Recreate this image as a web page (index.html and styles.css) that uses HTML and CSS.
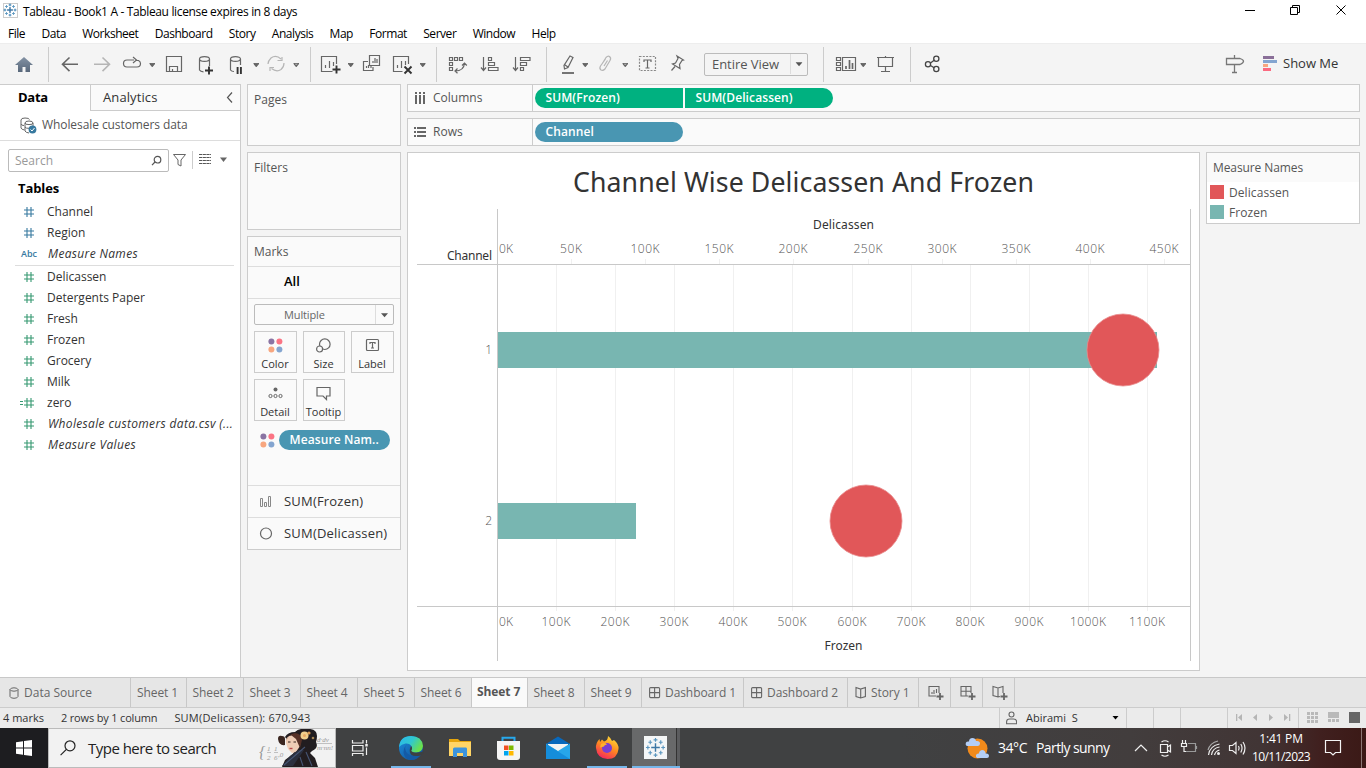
FILE: index.html
```html
<!DOCTYPE html>
<html lang="en">
<head>
<meta charset="utf-8">
<title>Tableau - Book1 A</title>
<link rel="stylesheet" href="styles.css">
</head>
<body>
<svg width="0" height="0" class="defs">
  <defs>
    <symbol id="hash" viewBox="0 0 12 12"><path d="M4 1v10M8 1v10M1 4h10M1 8h10" fill="none" stroke="currentColor" stroke-width="1.1"/></symbol>
    <symbol id="caret" viewBox="0 0 6 4"><path d="M0 0h6L3 3.6z" fill="currentColor"/></symbol>
    <symbol id="dash" viewBox="0 0 12 12"><rect x=".6" y=".6" width="10" height="10" rx="1" fill="none" stroke="currentColor" stroke-width="1.1"/><path d="M5.6 1v10M1 5.6h10" stroke="currentColor" stroke-width="1.1"/></symbol>
    <symbol id="book" viewBox="0 0 12 13"><path d="M1 1.500l4.600 1.600L10.400 1.500v9L5.600 12 1 10.500zM5.700 3v9" fill="none" stroke="currentColor" stroke-width="1.1"/></symbol>
    <symbol id="dots" viewBox="0 0 15 15"><circle cx="3.400" cy="3.400" r="3" fill="#8a74a3"/><circle cx="11.400" cy="3.400" r="3" fill="#fb7484"/><circle cx="3.400" cy="11.400" r="3" fill="#f7a67f"/><circle cx="11.400" cy="11.400" r="3" fill="#84a5d0"/></symbol>
    <symbol id="logo" viewBox="0 0 22 22">
      <path d="M11 6.500v9M6.500 11h9" stroke="#3d77a5" stroke-width="1.500"/>
      <path d="M11 1v4M9 3h4M11 17v4M9 19h4M3 9v4M1 11h4M19 9v4M17 11h4M5.500 3.500v4M3.500 5.500h4M16.500 3.500v4M14.500 5.500h4M5.500 14.500v4M3.500 16.500h4M16.500 14.500v4M14.500 16.500h4" stroke="#5b96bf" stroke-width="1.200"/>
    </symbol>
  </defs>
</svg>

<header class="titlebar">
  <svg class="app-icon" width="15" height="15"><rect x=".5" y=".5" width="14" height="14" fill="#fff" stroke="#ccc"/><g class="logo-strong"><use href="#logo" x="0" y="0" width="14" height="14"/><use href="#logo" x="0" y="0" width="14" height="14"/></g></svg>
  <span class="app-title">Tableau - Book1 A - Tableau license expires in 8 days</span>
  <svg class="window-buttons" width="110" height="20" viewBox="1240 1 110 20" fill="none" stroke="#000"><path d="M1245 10.500h10M1290.500 7.500h7v7h-7zM1292.500 7v-1.500h7v7h-1.500M1336.500 5.500l9 9M1345.500 5.500l-9 9"/></svg>
</header>
<nav class="menubar"><span>File</span><span>Data</span><span>Worksheet</span><span>Dashboard</span><span>Story</span><span>Analysis</span><span>Map</span><span>Format</span><span>Server</span><span>Window</span><span>Help</span></nav>

<section class="toolbar">
  <svg class="group" width="48" height="35" viewBox="0 47 48 35"><defs><linearGradient id="hg" y1="0" y2="1" x2="0"><stop stop-color="#8392a4"/><stop offset="1" stop-color="#59687b"/></linearGradient></defs><path d="M24 57l9 8h-3v7h-4.500v-5h-3v5H18v-7h-3z" fill="url(#hg)"/></svg>
  <svg class="group" width="262" height="35" viewBox="48 47 262 35" fill="none" stroke="#666" stroke-width="1.2">
    <path d="M78 64.300H63M69.500 57.500l-7 6.800 7 6.800" stroke-width="1.6"/>
    <path d="M94 64.300h15M102.500 57.500l7 6.800-7 6.800" stroke="#b5b5b5" stroke-width="1.6"/>
    <path d="M134 60h-7q-3.500 0-3.500 3.500t3.500 3.500h10q3.500 0 3.500-3.500 0-2-2-3h-3M133 57l3.500 3-3.500 3"/>
    <use href="#caret" x="149.500" y="63" width="5.500" height="4" color="#666"/>
    <path d="M166.500 56.500h15v15h-15zM169.500 71v-4.500h8v4.500M172.500 71v-2"/>
    <path d="M199.500 59v11q1 1.800 4 1.800M209.500 59v7M199.500 59a5 2.400 0 0 1 10 0a5 2.400 0 0 1-10 0"/><path d="M209 66.500v8M205 70.500h8" stroke="#333" stroke-width="1.9"/>
    <path d="M230.500 59v11q1 1.500 3.500 1.500M240.500 59v6M230.500 59a5 2.400 0 0 1 10 0a5 2.400 0 0 1-10 0"/><path d="M237.600 67v7M240.900 67v7" stroke="#333" stroke-width="1.9"/>
    <use href="#caret" x="253.500" y="63" width="5.500" height="4" color="#666"/>
    <g stroke="#b5b5b5"><path d="M268 64q0-3 3-6 5-3.500 10 1M284 63q0 4-3 6.500-4.500 3-9.500-1M282 57v3.500h-4.500M270 71v-3.500h4"/></g>
    <use href="#caret" x="293.500" y="63" width="5.500" height="4" color="#aaa"/>
  </svg>
  <svg class="group" width="126" height="35" viewBox="310 47 126 35" fill="none" stroke="#666" stroke-width="1.2">
    <path d="M336.500 64v-7.500h-15v15h11M325.500 68v-3M329.500 68v-7M333.500 66v-4"/><path d="M336.500 65.500v8M332.500 69.500h8" stroke="#333" stroke-width="1.9"/>
    <use href="#caret" x="348" y="63" width="5.500" height="4" color="#666"/>
    <path d="M369.500 55.500h10v10h-10zM373 63v-2M375 63v-5M377 63v-4M368 61.500h-4.500v9h9.500v-3.500M366.500 68v-2M368.500 68v-3M371 68v-2"/>
    <path d="M408.500 64v-7.500h-15v15h9M397.500 68v-3M401.500 68v-7M405.500 65v-4"/><path d="M404.500 66.500l7 7M411.500 66.500l-7 7" stroke="#333" stroke-width="1.9"/>
    <use href="#caret" x="420" y="63" width="5.500" height="4" color="#666"/>
  </svg>
  <svg class="group" width="110" height="35" viewBox="436 47 110 35" fill="none" stroke="#666" stroke-width="1.2">
    <path d="M449.500 57.500h3v3h-3zM454.500 57.500h3v3h-3zM459.500 57.500h3v3h-3zM449.500 62.500h3v3h-3zM449.500 67.500h3v3h-3zM455 71q9 0 9.500-8M462 65.500l2.500-2.500 2.300 2.500M457.500 68.500L455 71l2.500 2.300"/>
    <path d="M483.500 57v13M481 67.500l2.500 3 2.500-3M488.500 57.500h3v3h-3zM488.500 62.500h6v3h-6zM488.500 67.500h9.500v3h-9.500z"/>
    <path d="M515.500 57v13M513 67.500l2.500 3 2.500-3M520.500 57.500h9.500v3h-9.500zM520.500 62.500h6v3h-6zM520.500 67.500h3v3h-3z"/>
  </svg>
  <svg width="158" height="35" viewBox="546 47 158 35" fill="none" stroke="#666" stroke-width="1.2">
    <path d="M570 56l3 1.500-5 10-3.500 1.500-.5-3.500zM565 65l3 2"/><path d="M562 73h12" stroke-width="1.8"/>
    <use href="#caret" x="582.500" y="63" width="5.500" height="4" color="#666"/>
    <path d="M602 64l4-6.500q2-2 3.500-1 2 1.500.5 4l-5 8.500q-2 2-4 1-2-1.500-.5-4l5-7M604 66l3.500-5.500" stroke="#b5b5b5"/>
    <use href="#caret" x="622.500" y="63" width="5.500" height="4" color="#aaa"/>
    <path d="M639.500 56.500h16v14h-16z" stroke-dasharray="2 1.300" stroke="#888"/><path d="M644 62v-2h7v2M647.500 60v8M645.500 68h4"/>
    <path d="M677 56l6.500 4-1.500.5-2.500 4 .5 4-7.500-4.500 3-1 2.500-4.500zM675 66.500l-3.500 4"/>
  </svg>
  <div class="fit"><span>Entire View</span><svg width="17" height="20"><use href="#caret" x="4.500" y="8" width="7" height="5" color="#555"/></svg></div>
  <svg class="group" width="102" height="35" viewBox="808 47 102 35" fill="none" stroke="#666" stroke-width="1.2">
    <path d="M823.500 47v35" stroke="#ccc" stroke-width="1"/>
    <path d="M836.500 57.500h4v3h-4zM836.500 62.500h4v3h-4zM836.500 67.500h4v3h-4zM842.500 57.500h13v13h-13z"/><path d="M846 69v-3M849.500 69v-9M852.500 69v-6" stroke-width="1.7"/>
    <use href="#caret" x="860.500" y="63" width="5.500" height="4" color="#666"/>
    <path d="M877 57.500h17M878.500 58v8.500h14V58M885.500 67v4.500M881 71.500h9M885.500 56v1"/>
  </svg>
  <svg width="340" height="35" viewBox="910 47 340 35" fill="none" stroke="#444" stroke-width="1.3">
    <path d="M930.500 63l4-3M930.500 65.500l4 2.500"/><circle cx="928" cy="64.200" r="2.600"/><circle cx="936.300" cy="58.800" r="2.600"/><circle cx="936.300" cy="69" r="2.600"/>
    <path d="M1226.500 58.500h13.500q3.500 1 3.500 2.700t-3.500 3.300h-13.500zM1234.500 55v3M1234.500 65v7M1232 72.500h5" stroke="#777"/>
  </svg>
  <svg width="33" height="35" viewBox="1250 47 33 35"><path d="M1263 56h11v3h-11z" fill="#8a6f98"/><path d="M1263 60h14v3h-14z" fill="#84a5d0"/><path d="M1263 64h5v3h-5z" fill="#f7a67f"/><path d="M1263 68h8v3h-8z" fill="#fb6a80"/></svg>
  <span class="showme">Show Me</span>
</section>

<main class="workspace">
  <aside class="data-pane">
    <div class="pane-tabs"><b>Data</b><span class="analytics">Analytics<svg width="7" height="11" fill="none" stroke="#555" stroke-width="1.200"><path d="M6 .5l-4.500 5 4.500 5"/></svg></span></div>
    <div class="source"><svg width="18" height="18" fill="none" stroke="#666"><path d="M1 3v8q.5 1.500 3.500 2M1 3q0-2 4-2t4.500 1.500M1 7q.5 1.500 3 1.500M5 6q0-2 4-2t4 2M5 6v8q.5 1.500 4 2M5 6q0 1.600 4 1.600t4-1.600v3M5 10q1 1.600 4 1.300"/><circle cx="12.500" cy="12.500" r="3.900" fill="#37799f" stroke="none"/><path d="M10.500 12.500l1.500 1.500 2.500-3" stroke="#fff"/></svg><span>Wholesale customers data</span></div>
    <div class="search-row">
      <div class="search"><span>Search</span><svg width="12" height="12" fill="none" stroke="#555" stroke-width="1.200"><circle cx="6.500" cy="4.700" r="3.300"/><path d="M4 7L1 10.200"/></svg></div>
      <svg width="62" height="22" viewBox="169 149 62 22" fill="none" stroke="#666"><path d="M173.500 154.500h12l-4.500 5.500v6l-3-1.500V160z"/><path d="M192.500 151v18" stroke="#ccc"/><path d="M199 155.500h12M199 158.500h12M199 161.500h12M199 164.500h12" stroke="#555" stroke-dasharray="3.200 .500" transform="translate(0 -1)"/><path d="M220 157.500h7l-3.500 4.500z" fill="#666" stroke="none"/></svg>
    </div>
    <h3>Tables</h3>
    <ul class="fields dims">
      <li><svg><use href="#hash"/></svg>Channel</li>
      <li><svg><use href="#hash"/></svg>Region</li>
      <li><small>Abc</small><i>Measure Names</i></li>
    </ul>
    <ul class="fields meas">
      <li><svg><use href="#hash"/></svg>Delicassen</li>
      <li><svg><use href="#hash"/></svg>Detergents Paper</li>
      <li><svg><use href="#hash"/></svg>Fresh</li>
      <li><svg><use href="#hash"/></svg>Frozen</li>
      <li><svg><use href="#hash"/></svg>Grocery</li>
      <li><svg><use href="#hash"/></svg>Milk</li>
      <li><svg class="calc" viewBox="0 0 16 12"><path d="M1 4.500h3M1 7.500h3" stroke="currentColor"/><use href="#hash" x="4" width="12" height="12"/></svg>zero</li>
      <li><svg><use href="#hash"/></svg><i>Wholesale customers data.csv (...</i></li>
      <li><svg><use href="#hash"/></svg><i>Measure Values</i></li>
    </ul>
  </aside>

  <section class="cards">
    <div class="card pages">Pages</div>
    <div class="card filters">Filters</div>
    <div class="card marks">
      <div class="marks-head">Marks</div>
      <div class="marks-all">All</div>
      <div class="marks-body">
        <div class="mark-type"><span>Multiple</span><svg width="18" height="19"><use href="#caret" x="5" y="8" width="7" height="5" color="#555"/></svg></div>
        <div class="mark-buttons">
          <div><svg width="15" height="15"><use href="#dots"/></svg>Color</div>
          <div><svg width="15" height="15" fill="none" stroke="#666" stroke-width="1.2"><circle cx="8.800" cy="6.200" r="5.300"/><circle cx="3.600" cy="11" r="3" fill="#fafafa"/></svg>Size</div>
          <div><svg width="15" height="15" fill="none" stroke="#666" stroke-width="1.200"><rect x="1.500" y="1.500" width="12" height="11" rx="1"/><path d="M5 6V4.500h5V6M7.500 4.500V10M6 10h3"/></svg>Label</div>
          <div><svg width="15" height="15" fill="none" stroke="#666"><circle cx="7.500" cy="3.500" r="2" fill="#666" stroke="none"/><circle cx="2.500" cy="10" r="1.600"/><circle cx="7.500" cy="10" r="1.600"/><circle cx="12.500" cy="10" r="1.600"/></svg>Detail</div>
          <div><svg width="15" height="15" fill="none" stroke="#666" stroke-width="1.200"><path d="M1 1.500h13v8.500h-3.500v3.500L7 10H1z"/></svg>Tooltip</div>
        </div>
        <div class="encoding"><svg width="15" height="15"><use href="#dots"/></svg><span class="pill blue">Measure Nam..</span></div>
      </div>
      <div class="marks-row"><svg width="14" height="14" fill="none" stroke="#888"><path d="M1.500 3.500h2v8h-2zM5.500 7.500h2v4h-2zM9.500 1.500h2v10h-2z"/></svg>SUM(Frozen)</div>
      <div class="marks-row"><svg width="14" height="14" fill="none" stroke="#666" stroke-width="1.200"><circle cx="7" cy="6.500" r="5.500"/></svg>SUM(Delicassen)</div>
    </div>
  </section>

  <section class="sheet">
    <div class="shelf"><div class="shelf-name"><svg width="12" height="12" viewBox="0 0 12 12" fill="#666"><path d="M1 0h2v2H1zM1 3h2v9H1zM5 0h2v2H5zM5 3h2v9H5zM9 0h2v2H9zM9 3h2v9H9z"/></svg>Columns</div><span class="pill green first">SUM(Frozen)</span><span class="pill green last">SUM(Delicassen)</span></div>
    <div class="shelf"><div class="shelf-name"><svg width="12" height="12" viewBox="0 0 12 12" fill="#666"><path d="M0 1h2v2H0zM3 1h9v2H3zM0 5h2v2H0zM3 5h9v2H3zM0 9h2v2H0zM3 9h9v2H3z"/></svg>Rows</div><span class="pill blue">Channel</span></div>
    <div class="view-row">
      <div class="view">
        <svg class="chart" width="791" height="517" viewBox="408 153 791 517">
          <text class="chart-title" x="803.500" y="192" text-anchor="middle" textLength="461">Channel Wise Delicassen And Frozen</text>
          <g class="axis-title"><text x="843.500" y="229" text-anchor="middle" textLength="61">Delicassen</text><text x="843.500" y="650" text-anchor="middle" textLength="38">Frozen</text><text x="447" y="260" textLength="45">Channel</text></g>
          <path class="grid" d="M556.500 265v346M615.500 265v346M674.500 265v346M733.500 265v346M792.500 265v346M852.500 265v346M911.500 265v346M970.500 265v346M1029.500 265v346M1088.500 265v346M1147.500 265v346M571.500 259v5M645.500 259v5M719.500 259v5M793.500 259v5M868.500 259v5M942.500 259v5M1016.500 259v5M1090.500 259v5M1164.500 259v5"/>
          <path class="rule" d="M497.500 209v452M1190.500 209v452M417 264.500h774M417 606.500h774"/>
          <g class="tick">
            <text x="499" y="253" textLength="14">0K</text>
            <g text-anchor="middle"><text x="571" y="253" textLength="22">50K</text><text x="645" y="253" textLength="29">100K</text><text x="719" y="253" textLength="29">150K</text><text x="793" y="253" textLength="29">200K</text><text x="868" y="253" textLength="29">250K</text><text x="942" y="253" textLength="29">300K</text><text x="1016" y="253" textLength="29">350K</text><text x="1090" y="253" textLength="29">400K</text><text x="1164" y="253" textLength="29">450K</text></g>
            <text x="499" y="626" textLength="14">0K</text>
            <g text-anchor="middle"><text x="556" y="626" textLength="29">100K</text><text x="615" y="626" textLength="29">200K</text><text x="674" y="626" textLength="29">300K</text><text x="733" y="626" textLength="29">400K</text><text x="792" y="626" textLength="29">500K</text><text x="852" y="626" textLength="29">600K</text><text x="911" y="626" textLength="29">700K</text><text x="970" y="626" textLength="29">800K</text><text x="1029" y="626" textLength="29">900K</text><text x="1088" y="626" textLength="36">1000K</text><text x="1147" y="626" textLength="36">1100K</text></g>
            <g text-anchor="end"><text x="492" y="354">1</text><text x="492" y="525">2</text></g>
          </g>
          <g fill="#78b6b1"><rect x="498" y="332" width="659" height="36"/><rect x="498" y="503" width="138" height="36"/></g>
          <g fill="#e15759" stroke="#e98a8b" stroke-width=".8"><circle cx="1123" cy="350" r="36"/><circle cx="866" cy="521" r="36"/></g>
        </svg>
      </div>
      <div class="legend">
        <div class="legend-head">Measure Names</div>
        <div class="legend-item"><i class="red"></i>Delicassen</div>
        <div class="legend-item"><i class="teal"></i>Frozen</div>
      </div>
    </div>
  </section>
</main>

<nav class="sheet-tabs">
  <span class="ds"><svg width="10" height="12" fill="none" stroke="#666"><path d="M1 2.500v7q.5 1.800 4 1.800t4-1.800v-7q-.5-1.700-4-1.700T1 2.500q.5 1.700 4 1.700t4-1.700"/></svg>Data Source</span><span>Sheet 1</span><span class="w57">Sheet 2</span><span class="w57">Sheet 3</span><span class="w57">Sheet 4</span><span class="w57">Sheet 5</span><span class="w57">Sheet 6</span><span class="active">Sheet 7</span><span class="w57">Sheet 8</span><span class="w57">Sheet 9</span><span class="w102"><svg width="12" height="12"><use href="#dash"/></svg>Dashboard 1</span><span class="w104"><svg width="12" height="12"><use href="#dash"/></svg>Dashboard 2</span><span class="w71"><svg width="12" height="13"><use href="#book"/></svg>Story 1</span><span class="new"><svg width="16" height="16" fill="none" stroke="#666" stroke-width="1.1"><path d="M11 8V1.500H1v9.500h7M4 9V7M6 9V5M8.500 8V4"/><path d="M12 8v7M8.500 11.500h7" stroke-width="1.800"/></svg></span><span class="new"><svg width="16" height="16" fill="none" stroke="#666" stroke-width="1.1"><path d="M11 8V1.500H1V11h7M6 1.500V11M1 6.200h10"/><path d="M12 8v7M8.500 11.500h7" stroke-width="1.800"/></svg></span><span class="new"><svg width="16" height="16" fill="none" stroke="#666" stroke-width="1.1"><path d="M11 8V1.500L6 3 1 1.500v9l5 1.500 2-.5M6 3v9"/><path d="M12 8v7M8.500 11.500h7" stroke-width="1.800"/></svg></span>
</nav>

<div class="status">
  <span>4 marks</span><span class="size">2 rows by 1 column</span><span class="total">SUM(Delicassen): 670,943</span>
  <div class="user"><svg width="11" height="14" fill="none" stroke="#666" stroke-width="1.1"><circle cx="5.500" cy="3.500" r="2.500"/><path d="M.6 12.800v-2q0-2.800 3-2.800h4q3 0 3 2.800v2z"/></svg><span>Abirami&nbsp; S</span><svg class="user-caret" width="7" height="4"><use href="#caret" width="7" height="4" color="#000"/></svg></div>
  <svg class="status-nav" width="240" height="20" viewBox="1126 708 240 20"><path d="M1126.500 708v20M1153.500 708v20M1180.500 708v20M1227.500 708v20M1298.500 708v20" stroke="#ccc"/><path d="M1236 714h1.300v7H1236zM1242 714v7l-4-3.500zM1257 714v7l-4-3.500zM1269 714v7l4-3.500zM1284 714v7l4-3.500zM1289 714h1.300v7H1289z" fill="#b5b5b5"/><path d="M1307 712h3v3h-3zM1311 712h3v3h-3zM1315 712h3v3h-3zM1307 716h3v3h-3zM1311 716h3v3h-3zM1315 716h3v3h-3zM1307 720h3v3h-3zM1311 720h3v3h-3zM1315 720h3v3h-3zM1328 712h11v6h-11zM1328 719h3v3h-3zM1332 719h3v3h-3zM1336 719h3v3h-3z" fill="#b9b9b9"/><path d="M1349 712h11v11h-11z" fill="#666"/></svg>
</div>

<footer class="taskbar">
  <div class="start"><svg width="16" height="16" fill="#fff"><path d="M0 2.200l7-1V7.600H0zM8 1l8-1v7.600H8zM0 8.500h7v6.300l-7-1zM8 8.500h8V16l-8-1.100z"/></svg></div>
  <div class="win-search">
    <svg width="16" height="16" fill="none" stroke="#222" stroke-width="1.200"><circle cx="10" cy="5.800" r="5"/><path d="M6.400 9.400L.6 15.200"/></svg>
    <span>Type here to search</span>
    <svg class="portrait" width="76" height="38" viewBox="259 729 76 38">
      <g class="formula"><text x="259" y="758" font-size="16">{</text><text x="267" y="751" font-size="7">1</text><text x="267" y="760" font-size="7">2</text><text x="274" y="751" font-size="7">1</text><text x="274" y="760" font-size="7">6</text><text x="278" y="757" font-size="7">,0</text><text x="317" y="742" font-size="7">d·dv</text><text x="317" y="750" font-size="7">m·nn!</text></g>
      <path d="M317 743.500h15M267 752.500h4M274 752.500h4" stroke="#aaa" stroke-width=".7"/>
      <path d="M278 739q0-4 4-3 3 0 3 3l0 6q-6 1-7-6z" fill="#3a2620"/>
      <path d="M285 737q3-5 10-5 4-4 11-3 11-1 11 7 0 3-1 6 3 6-4 9l-2 2 5 5 3 9h-36l3-7 8-6 2-4z" fill="#221d20"/>
      <path d="M286 743q-1-5 3-7l8-2 4 4-1 8-4 6-4 1-4-4z" fill="#efcdb6"/>
      <path d="M286 741q2-7 9-8 7 1 7 7l-2 8-4-9-5-4q-3 1-5 6z" fill="#573127"/>
      <path d="M288 742h2.500M293.500 742h2.500" stroke="#35221e"/><path d="M289.500 748.500h3" stroke="#b9474b" stroke-width="1.400"/>
      <path d="M282 766l8-10 8-6h6l-11 16z" fill="#2c303e"/><path d="M284 765l21-18M306 752l6 14M300 757l3 9" stroke="#465574" stroke-width="1.100"/>
      <circle cx="304.500" cy="735.500" r="4" fill="#f0cf8c"/><circle cx="304.500" cy="735.500" r="1.500" fill="#e9a963"/><circle cx="309" cy="733" r="1.600" fill="#d99b55"/><circle cx="313" cy="738" r="1.300" fill="#a88552"/>
    </svg>
  </div>
  <svg class="task-icons" width="344" height="40" viewBox="336 728 344 40">
    <defs>
      <linearGradient id="e1" x1="0" y1="0" x2="1" y2=".5"><stop stop-color="#2ab8ee"/><stop offset=".55" stop-color="#31c8cf"/><stop offset="1" stop-color="#6be14a"/></linearGradient>
      <linearGradient id="e2" x1="0" y1="0" x2="1" y2="1"><stop stop-color="#1b8fe0"/><stop offset="1" stop-color="#114a8f"/></linearGradient>
      <linearGradient id="f1" x1=".8" y1="0" x2=".3" y2="1"><stop stop-color="#ffe23a"/><stop offset=".5" stop-color="#ff8a20"/><stop offset="1" stop-color="#f5245f"/></linearGradient>
    </defs>
    <g fill="none" stroke="#eee" stroke-width="1.200"><path d="M352.500 740v3h10.500v-3M352.500 745.500h10.500v5.500h-10.500zM352.500 756v-2.500h10.500v2.500M366.500 740v3.500M366.500 747.500v7.500"/><path d="M366.500 744v2.500" stroke-width="2.500"/></g>
    <circle cx="411" cy="748" r="12" fill="url(#e2)"/>
    <path d="M399 747q1-11 12-11 11 0 12 10-.5 6-7 6.500-5 .5-5-2 2-2 0-5-2-2.500-5.500-2-4 .5-6.500 3.500z" fill="url(#e1)"/>
    <path d="M407 744q-4 5 1 10 5 4 13 .500-4 5.500-10 5.500-7-1-7.500-8 .5-5 3.500-8z" fill="#145aa5"/>
    <path d="M411 746q2 2 .3 4.500.5 2 5 2.200l7-1v2l-2 1.500q-7 2-10-.5-3-3-.3-8.700z" fill="#3d4042"/>
    <path d="M449 739h9l2 2h11v4h-22z" fill="#e5a50c"/><path d="M449 742h22v14h-22z" fill="#ffd566"/><path d="M453 749q0-1.500 1.500-1.500h11.500q1 0 1 1.500v8h-4v-4h-6v4h-4z" fill="#3c94db"/>
    <path d="M502.500 741v-3.200h12v3.200" fill="none" stroke="#27a8ec" stroke-width="2"/><path d="M497 741h23v16q0 3-3 3h-17q-3 0-3-3z" fill="#f5f5f5"/><path d="M504 745.500h4.500v4.500H504z" fill="#f25022"/><path d="M509 745.500h4.500v4.500H509z" fill="#7fba00"/><path d="M504 751h4.500v4.500H504z" fill="#00a4ef"/><path d="M509 751h4.500v4.500H509z" fill="#ffb900"/>
    <path d="M546 744l12-7.500 12 7.500z" fill="#0868bc"/><path d="M548 744h20v8h-20z" fill="#f3f3f3"/><path d="M546 743.500l12 7.500 12-7.500V759h-24z" fill="#27a6e9"/><path d="M546 744l24 15h-24z" fill="#158ddb"/>
    <path d="M596 748q-.5-5 3.500-9l.5 3 2-2.500 2 2q4-1 4-5.500 3 2 4 5l2-1q5 4 4.500 9-1 10-11 10-10.500-.5-11.500-11z" fill="url(#f1)"/><circle cx="607" cy="748" r="5" fill="#7a3ed3"/><path d="M601 744q4-2 6 .5-3 .5-3 2l-4 1z" fill="#ffb12e"/>
    <path d="M632 728h44v40h-44z" fill="#68696a"/><path d="M676 728h1v40h-1z" fill="#333"/><path d="M677 728h3v40h-3z" fill="#5b5c5e"/>
    <rect x="644" y="736" width="23" height="23" fill="#f4f6f7"/><use href="#logo" x="645" y="737" width="21" height="21"/>
    <path d="M391 766h40v2h-40zM587 766h40v2h-40zM632 766h48v2h-48z" fill="#75b6ea"/>
  </svg>
  <div class="weather">
    <svg width="26" height="24" viewBox="965 735 26 24"><circle cx="977.500" cy="747.500" r="10" fill="#f18a1b"/><path d="M967 745q-2-1-1-3.500 1-1.500 3-1 0-3.500 3.500-3.500 3 0 3.500 3 4-.5 4 2.500 0 2-2 2.500zM977 757q-1.500-1-1-3 1-2 3-1.500 0-3 3-3.500 3.500 0 3.500 3.500 3.500-.5 3.500 2.500 0 2-2 2z" fill="#b3cef6"/></svg>
    <span>34°C</span><span>Partly sunny</span>
  </div>
  <svg class="tray" width="118" height="40" viewBox="1130 728 118 40" fill="none" stroke="#eee" stroke-width="1.200">
    <path d="M1135 751l6-6 6 6M1160.500 744.500h7v8h-7zM1167.500 747l3-2v7l-3-2M1161.500 742q3.500-2.500 7 0M1161.500 755q3.500 2.500 7 0"/>
    <path d="M1182.500 740v3M1185.500 740v3M1181.500 743.500h5v3h-5zM1184 747v4.500h2"/><path d="M1188 743.500h7.500v8H1186M1196.500 746v3" stroke="#999"/>
    <path d="M1208.500 755q1-9 11-11M1211.500 755q1-7 8-8M1214.500 755q1-4 5-5"/><circle cx="1218.500" cy="753.500" r="1.500" fill="#eee" stroke="none"/><path d="M1208 750q2-7 10-9" stroke="#aaa"/>
    <path d="M1229.500 745.500h3l3.500-3v11l-3.500-3h-3zM1238.500 746q1.300 2 0 4.500M1240.800 744q2.500 4 0 8.500M1243 742q4 6 0 12.500"/>
  </svg>
  <div class="clock"><span>1:41 PM</span><span class="date">10/11/2023</span></div>
  <svg class="notify" width="54" height="40" viewBox="1312 728 54 40" fill="none" stroke="#f4f4f4" stroke-width="1.200"><path d="M1325.500 740.500h15v12h-5l-2.500 2.500-2.500-2.500h-5z"/><path d="M1361.500 728v40" stroke="#8b7674" stroke-width="1"/></svg>
</footer>
</body>
</html>
```

FILE: styles.css
```css
* { box-sizing: border-box; }
body { margin: 0; width: 1366px; height: 768px; overflow: hidden; display: flex; flex-direction: column; background: #f4f4f4; font: 12px/16px "Open Sans", "Noto Sans", sans-serif; color: #333; white-space: nowrap; }
svg { display: block; flex: none; }
.defs { position: absolute; }
h3, ul { margin: 0; padding: 0; }
li { list-style: none; }

.titlebar { height: 24px; background: #fff; display: flex; align-items: flex-start; padding: 1px 16px 0 3px; color: #000; }
.app-icon { margin-top: 2px; }
.app-title { margin: 3px auto 0 5px; letter-spacing: -.35px; }
.menubar { height: 19px; background: #fff; display: flex; gap: 16.300px; padding: 2px 8px 0; color: #000; letter-spacing: -.46px; }

.toolbar { height: 41px; display: flex; align-items: center; border-top: 1px solid #ededed; }
.group { box-sizing: content-box; margin-right: -1px; border-right: 1px solid #ccc; }
.fit { width: 104px; height: 23px; display: flex; justify-content: space-between; align-items: center; border: 1px solid #bbb; border-radius: 2px; padding-left: 7px; color: #555; font-size: 13px; line-height: 18px; }
.fit span { padding-bottom: 1px; letter-spacing: -.05px; }
.fit svg { border-left: 1px solid #ddd; }
.showme { font-size: 13px; padding-bottom: 2px; }

.workspace { height: 593px; display: flex; }
.data-pane { width: 241px; background: #fff; border-right: 1px solid #ccc; border-top: 1px solid #ccc; }
.pane-tabs { height: 26px; display: flex; font-size: 13px; line-height: 25px; }
.pane-tabs b { width: 90px; padding-left: 18px; color: #000; letter-spacing: -.3px; }
.analytics { flex: 1; display: flex; justify-content: space-between; align-items: center; background: #fafafa; border-left: 1px solid #ccc; border-bottom: 1px solid #ccc; padding: 0 7px 0 12px; letter-spacing: .1px; }
.source { height: 30px; display: flex; align-items: center; gap: 4px; padding-left: 20px; border-bottom: 1px solid #ddd; color: #555; }
.source span { padding-bottom: 2px; letter-spacing: -.08px; }
.search-row { height: 37px; display: flex; padding: 8px 0 0 8px; }
.search { width: 161px; height: 23px; display: flex; align-items: center; justify-content: space-between; border: 1px solid #bbb; border-radius: 2px; padding: 0 5px 0 6px; color: #999; }
h3 { height: 23px; padding-left: 18px; font-size: 13px; line-height: 21px; color: #000; letter-spacing: -.1px; }
.fields li { height: 21px; display: flex; align-items: center; }
.fields li > svg, .fields li > small { width: 12px; height: 12px; margin: 0 12px 0 23px; flex: none; }
.fields li > .calc { width: 16px; margin-left: 19px; }
.fields li > small { width: 17px; margin: 0 9px 0 21px; font: 600 9px/12px "Open Sans", sans-serif; }
.fields i { letter-spacing: .34px; padding-left: 1px; }
.dims { height: 64px; }
.dims svg, .dims small { color: #37799f; }
.meas svg { color: #359871; }
.meas { margin: 0 6px 0 0; }
.meas::before { content: ""; display: block; border-top: 1px solid #ddd; margin-left: 15px; }

.cards { width: 160px; margin-left: 6px; display: flex; flex-direction: column; gap: 6px; }
.card { width: 154px; border: 1px solid #ccc; background: #fafafa; color: #555; padding: 7px 6px; }
.pages { height: 62px; }
.filters { height: 78px; }
.marks { height: 314px; padding: 0; color: #333; }
.marks-head { height: 30px; padding: 7px 6px; color: #555; border-bottom: 1px solid #ddd; }
.marks-all { height: 32px; padding: 6px 36px; border-bottom: 1px solid #ddd; color: #000; font-size: 13px; font-weight: 600; }
.marks-body { height: 186px; padding: 5px 6px; }
.mark-type { width: 140px; height: 21px; display: flex; align-items: center; justify-content: space-between; border: 1px solid #bbb; border-radius: 2px; padding-left: 29px; font-size: 11px; color: #666; }
.mark-type span { letter-spacing: -.12px; }
.mark-type svg { border-left: 1px solid #ddd; }
.mark-buttons { display: grid; grid-template-columns: 43px 42px 43px; gap: 6px; margin-top: 6px; }
.mark-buttons div { height: 42px; display: flex; flex-direction: column; align-items: center; border: 1px solid #ccc; padding: 6px 1px 0 0; font-size: 11px; line-height: 22px; }
.encoding { display: flex; align-items: center; gap: 4px; margin: 9px 0 0 6px; }
.encoding .pill { width: 111px; margin: 0; }
.marks-row { height: 32px; display: flex; align-items: center; gap: 11px; padding: 0 0 2px 11px; border-top: 1px solid #ddd; font-size: 13px; letter-spacing: .2px; }
.marks-row svg { margin-top: 2px; }

.pill { height: 20px; width: 148px; border-radius: 10px; padding-left: 10.500px; line-height: 19px; color: #fff; font-weight: 600; letter-spacing: .1px; margin: 3px 0 0 2px; }
.blue { background: #4996b2; }
.green { background: #00b180; }
.first { border-radius: 10px 0 0 10px; }
.last { border-radius: 0 10px 10px 0; }

.sheet { width: 953px; display: flex; flex-direction: column; gap: 6px; }
.shelf { height: 28px; display: flex; border: 1px solid #ccc; background: #fafafa; }
.shelf-name { width: 125px; display: flex; align-items: center; gap: 7px; padding-left: 6px; border-right: 1px solid #ccc; color: #555; }
.view-row { display: flex; gap: 6px; align-items: flex-start; }
.view { width: 793px; height: 519px; border: 1px solid #ccc; background: #fff; }
.legend { width: 154px; height: 72px; border: 1px solid #ccc; background: #fff; color: #555; }
.legend-head { height: 29px; background: #fafafa; padding: 7px 6px; letter-spacing: -.1px; }
.legend-item { height: 20px; display: flex; align-items: center; gap: 5px; padding: 2px 0 0 3px; letter-spacing: .08px; }
.legend-item i { width: 14px; height: 14px; margin-top: -2px; }
.red { background: #e15759; }
.teal { background: #78b6b1; }

.chart { font-family: "Noto Sans", sans-serif; fill: #333; }
.chart-title { font-size: 26.700px; }
.axis-title { font-size: 12px; }
.grid { stroke: #f0f0f0; fill: none; }
.rule { stroke: #c8c8c8; fill: none; }
.tick { font-family: "Open Sans", "Noto Sans", sans-serif; font-size: 12px; font-weight: 300; fill: #555; }

.sheet-tabs { height: 31px; display: flex; background: #e6e6e6; border-top: 1px solid #c8c8c8; border-bottom: 1px solid #ccc; color: #666; }
.sheet-tabs span { width: 56px; display: flex; align-items: center; gap: 4px; border-right: 1px solid #c8c8c8; padding-left: 6px; letter-spacing: -.08px; }
.sheet-tabs .ds { width: 131px; padding-left: 9px; gap: 5px; letter-spacing: 0; }
.sheet-tabs .w57 { width: 57px; padding-left: 5.500px; }
.sheet-tabs .w102 { width: 102px; padding-left: 7px; }
.sheet-tabs .w104 { width: 104px; padding-left: 7px; }
.sheet-tabs .w71 { width: 71px; padding-left: 7px; }
.sheet-tabs .new { width: 32px; padding-left: 9px; }
.sheet-tabs .active { width: 56px; background: #fafafa; font-weight: 700; padding: 0 0 2px 5px; color: #555; letter-spacing: -.1px; }

.status { height: 20px; display: flex; align-items: center; gap: 17px; padding-left: 3px; background: #ebebeb; font-size: 11px; }
.size { letter-spacing: -.17px; }
.total { letter-spacing: .2px; }
.user { width: 127px; height: 20px; margin-left: auto; display: flex; align-items: center; border-left: 1px solid #ccc; padding-left: 6px; gap: 9px; }
.user-caret { margin: 0 7px 0 auto; }
.status-nav { margin-left: -17px; }

.taskbar { height: 40px; display: flex; color: #fff; background: linear-gradient(90deg, #404142 0, #404142 900px, #423d3d 1130px, #413535 1260px, #40201f 1320px, #3b1916 1366px); }
.start { width: 48px; background: #1d1d20; padding: 12px 16px; }
.win-search { width: 288px; display: flex; align-items: center; border: 1px solid #bbb; background: #f2f2f2; padding-left: 11px; color: #222; font-size: 15px; }
.win-search span { margin-left: 12px; letter-spacing: -.52px; }
.portrait { margin-left: auto; }
.formula { font-family: "Liberation Serif", serif; fill: #999; font-style: italic; }
.weather { margin-left: auto; width: 165px; display: flex; align-items: center; font-size: 14px; }
.weather span { margin-left: 7px; letter-spacing: -.45px; }
.weather span + span { margin-left: 9px; letter-spacing: -.6px; }
.clock { width: 64px; display: flex; flex-direction: column; align-items: center; padding: 2px 0 0 2px; line-height: 18px; letter-spacing: -.2px; }
.date { letter-spacing: -.55px; }
```
